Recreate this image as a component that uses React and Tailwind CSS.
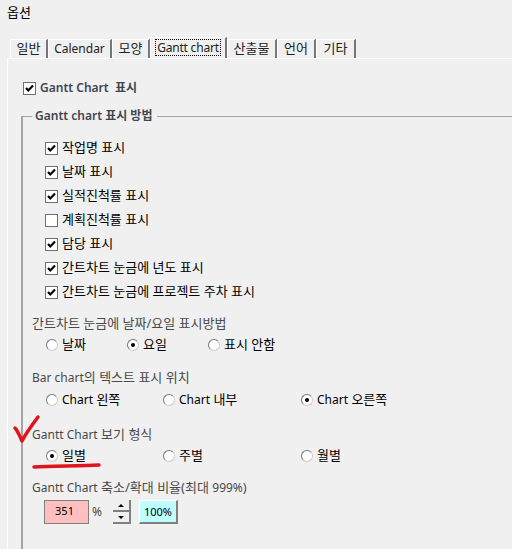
const FONT = "font-['Noto_Sans','Noto_Sans_CJK_KR',sans-serif]";

const tabs = [
  { label: '일반', w: 'w-[38px]' },
  { label: 'Calendar', w: 'w-[64px]', latin: true },
  { label: '모양', w: 'w-[38px]' },
  { label: 'Gantt chart', w: 'w-[77px]', active: true, latin: true },
  { label: '산출물', w: 'w-[50px]' },
  { label: '언어', w: 'w-[39px]' },
  { label: '기타', w: 'w-[40px]' },
];

const options = [
  { label: '작업명 표시', checked: true },
  { label: '날짜 표시', checked: true },
  { label: '실적진척률 표시', checked: true },
  { label: '계획진척률 표시', checked: false },
  { label: '담당 표시', checked: true },
  { label: '간트차트 눈금에 년도 표시', checked: true },
  { label: '간트차트 눈금에 프로젝트 주차 표시', checked: true },
];

function Latin({ children }) {
  return <span className="text-[12px]">{children}</span>;
}

function Checkbox({ checked }) {
  return (
    <span className="flex h-[13px] w-[13px] shrink-0 items-center justify-center border border-[#6f6f6f] bg-white">
      {checked && (
        <svg width="11" height="11" viewBox="0 0 11 11">
          <path d="M2 5 L4.3 7.5 L9 2.5" fill="none" stroke="#000" strokeWidth="2.2" />
        </svg>
      )}
    </span>
  );
}

function Radio({ checked }) {
  return (
    <span className="flex h-[12px] w-[12px] shrink-0 items-center justify-center rounded-full border border-[#777] border-b-[#ccc] border-r-[#ccc] bg-white">
      {checked && <span className="h-[4px] w-[4px] rounded-full bg-black" />}
    </span>
  );
}

function RadioRow({ items, columns, className }) {
  return (
    <div className={`grid h-[24px] items-center pl-[14px] ${columns} ${className}`}>
      {items.map((item) => (
        <div key={item.id} className="flex items-center gap-[4px] text-[13px] text-black">
          <Radio checked={item.checked} />
          <span>{item.label}</span>
        </div>
      ))}
    </div>
  );
}

function Label({ children, className }) {
  return <div className={`h-[18px] whitespace-pre text-[13px] leading-[18px] text-[#4a4a4a] ${className}`}>{children}</div>;
}

export default function App() {
  return (
    <div className={`relative h-[549px] w-[512px] overflow-hidden bg-[#f0f0f0] ${FONT}`}>
      <div className="flex h-[37px] items-start pl-[7px] pt-[3px] text-[13px] text-black">옵션</div>

      <div className="flex h-[21px] items-end pl-[10px]">
        {tabs.map((tab) => (
          <div
            key={tab.label}
            className={`flex ${tab.w} items-center justify-center border-r-2 border-r-[#777] border-l border-t border-l-white border-t-white text-[#222] ${
              tab.latin ? 'text-[12px]' : 'text-[13px]'
            } ${tab.active ? 'h-[21px] pb-[2px]' : 'h-[19px]'}`}
          >
            {tab.active ? (
              <span className="border border-dotted border-black px-[1px] leading-[15px] tracking-[-0.2px]">{tab.label}</span>
            ) : (
              tab.label
            )}
          </div>
        ))}
      </div>

      <div className="ml-[7px] h-[491px] border-l border-t border-white pl-[13px]">
        <div className="flex h-[57px] items-center gap-[4px] pl-[2px] pt-[1px]">
          <Checkbox checked />
          <span className="text-[12px] font-semibold text-[#3f4650]">Gantt Chart&nbsp; 표시</span>
        </div>

        <div className="h-[434px] border-l-2 border-t border-[#a3a3a3] pl-[9px]">
          <div className="-mt-[10px] flex h-[18px] w-fit items-center bg-[#f0f0f0] pl-[3px] pr-[5px] text-[12px] font-semibold text-[#3f4650]">
            Gantt chart 표시 방법
          </div>

          <div className="mt-[11px] flex flex-col pl-[13px]">
            {options.map((opt) => (
              <div key={opt.label} className="flex h-[24px] items-center gap-[4px] text-[13px] text-black">
                <Checkbox checked={opt.checked} />
                <span>{opt.label}</span>
              </div>
            ))}
          </div>

          <Label className="mt-[10px]">간트차트 눈금에 날짜/요일 표시방법</Label>
          <RadioRow
            className="mt-[1px]"
            columns="grid-cols-[81px_81px_1fr]"
            items={[
              { id: 'date', label: '날짜' },
              { id: 'day', label: '요일', checked: true },
              { id: 'none', label: '표시 안함' },
            ]}
          />

          <Label className="mt-[11px]"><Latin>Bar chart</Latin>의 텍스트 표시 위치</Label>
          <RadioRow
            className="mt-[2px]"
            columns="grid-cols-[117px_138px_1fr]"
            items={[
              { id: 'left', label: <><Latin>Chart</Latin> 왼쪽</> },
              { id: 'in', label: <><Latin>Chart</Latin> 내부</> },
              { id: 'right', label: <><Latin>Chart</Latin> 오른쪽</>, checked: true },
            ]}
          />

          <Label className="mt-[13px]"><Latin>Gantt Chart</Latin> 보기 형식</Label>
          <RadioRow
            className="mt-[1px]"
            columns="grid-cols-[117px_138px_1fr]"
            items={[
              { id: 'daily', label: '일별', checked: true },
              { id: 'weekly', label: '주별' },
              { id: 'monthly', label: '월별' },
            ]}
          />

          <Label className="mt-[10px]"><Latin>Gantt Chart</Latin> 축소/확대 비율(최대 <Latin>999%</Latin>)</Label>
          <div className="mt-[4px] flex h-[24px] items-stretch pl-[12px]">
            <div className="flex w-[45px] items-center justify-center border border-[#808080] bg-[#ffbfbf] pb-[1px] pr-[4px] text-[11px] text-black">
              351
            </div>
            <div className="flex w-[24px] items-center pl-[3px] text-[12px] text-[#4a4a4a]">%</div>
            <div className="flex w-[18px] flex-col">
              <div className="flex h-[12px] items-center justify-center border-b-2 border-r-2 border-b-[#808080] border-r-[#808080] bg-[#f0f0f0]">
                <span className="h-0 w-0 border-x-[3px] border-b-[3px] border-x-transparent border-b-black" />
              </div>
              <div className="flex h-[12px] items-center justify-center border-b-2 border-r-2 border-b-[#808080] border-r-[#808080] bg-[#f0f0f0]">
                <span className="h-0 w-0 border-x-[3px] border-t-[3px] border-x-transparent border-t-black" />
              </div>
            </div>
            <div className="ml-[8px] flex w-[39px] items-center justify-center border-b-2 border-l border-r-2 border-t border-b-[#808080] border-l-white border-r-[#808080] border-t-white bg-[#bfffff] pt-[2px] text-[11px] text-black">
              100%
            </div>
          </div>
        </div>
      </div>

      <svg className="pointer-events-none absolute left-0 top-0" width="512" height="549" viewBox="0 0 512 549">
        <path d="M15 428 C18 431 20 437 22 441 C26 433 32 425 38 417" fill="none" stroke="#e0141c" strokeWidth="3.5" strokeLinecap="round" strokeLinejoin="round" />
        <path d="M34 467 C52 466 80 466 99 465" fill="none" stroke="#e0141c" strokeWidth="3.5" strokeLinecap="round" />
      </svg>
    </div>
  );
}
